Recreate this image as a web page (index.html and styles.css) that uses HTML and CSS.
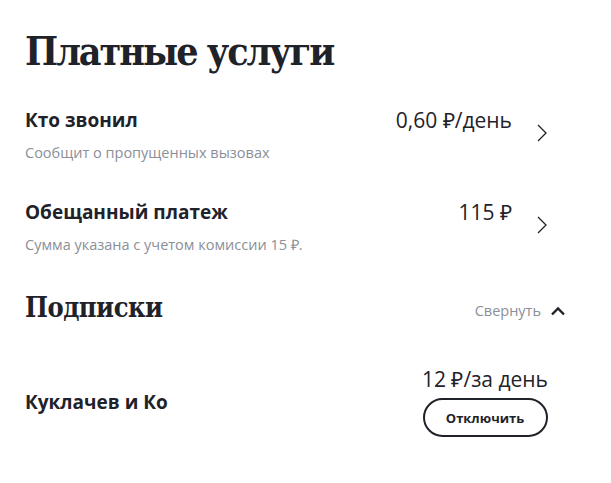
FILE: index.html
```html
<!DOCTYPE html>
<html lang="ru">
<head>
  <meta charset="UTF-8" />
  <title>Платные услуги</title>
  <link rel="stylesheet" href="styles.css">
</head>
<body>

  <div class="page">
    <h1>Платные услуги</h1>

    <div class="service">
      <div class="info">
        <div class="name">Кто звонил</div>
        <div class="note">Сообщит о пропущенных вызовах</div>
      </div>
      <div class="price">0,60 ₽/день</div>
      <svg class="chevron" width="12" height="18" viewBox="0 0 12 18"><path d="M2 1 L10 9 L2 17" fill="none" stroke="#1f2229" stroke-width="1.3"/></svg>
    </div>

    <div class="service">
      <div class="info">
        <div class="name">Обещанный платеж</div>
        <div class="note">Сумма указана с учетом комиссии 15 ₽.</div>
      </div>
      <div class="price">115 ₽</div>
      <svg class="chevron" width="12" height="18" viewBox="0 0 12 18"><path d="M2 1 L10 9 L2 17" fill="none" stroke="#1f2229" stroke-width="1.3"/></svg>
    </div>

    <div class="section-head">
      <h2>Подписки</h2>
      <div class="toggle">
        Свернуть
        <svg width="16" height="10" viewBox="0 0 16 10"><path d="M2 8.5 L8 2.5 L14 8.5" fill="none" stroke="#1f2229" stroke-width="2.4"/></svg>
      </div>
    </div>

    <div class="subscription">
      <div class="name">Куклачев и Ко</div>
      <div class="sub-right">
        <div class="price">12 ₽/за день</div>
        <button>Отключить</button>
      </div>
    </div>
  </div>

</body>
</html>
```

FILE: styles.css
```css
body {
  margin: 0;
  padding: 0;
  font-family: "Open Sans", Arial, sans-serif;
  background-color: white;
  color: #1f2229;
}

.page {
  width: 523px;
  padding: 26px 0 0 25px;
}

h1 {
  font-family: "DejaVu Serif", serif;
  font-stretch: condensed;
  font-weight: bold;
  font-size: 39px;
  line-height: 50px;
  margin: 0 0 32px;
  letter-spacing: -2px;
}

.service {
  display: flex;
  align-items: flex-start;
  margin-bottom: 38px;
}

.info {
  flex: 1;
}

.name {
  font-size: 19px;
  font-weight: bold;
  line-height: 24px;
}

.note {
  margin-top: 12px;
  font-size: 14.5px;
  color: #8a8f98;
  line-height: 18px;
}

.price {
  font-size: 21px;
  line-height: 24px;
}

.chevron {
  margin: 16px 0 0 24px;
}

.section-head {
  display: flex;
  justify-content: space-between;
  align-items: center;
  margin-top: 12px;
}

h2 {
  font-family: "DejaVu Serif", serif;
  font-stretch: condensed;
  font-weight: bold;
  font-size: 27px;
  margin: 0;
  letter-spacing: -0.5px;
}

.toggle {
  display: flex;
  align-items: center;
  gap: 9px;
  font-size: 14.5px;
  color: #8a8f98;
  margin-right: -18px;
  padding-top: 6px;
}

.subscription {
  display: flex;
  justify-content: space-between;
  align-items: center;
  margin-top: 44px;
}

.sub-right {
  display: flex;
  flex-direction: column;
  align-items: center;
}

button {
  margin-top: 7px;
  padding: 0;
  width: 125px;
  height: 39px;
  background-color: white;
  border: 2px solid #1f2229;
  border-radius: 20px;
  font-family: "Open Sans", Arial, sans-serif;
  font-weight: bold;
  font-size: 13px;
  color: #1f2229;
  cursor: pointer;
}
```
